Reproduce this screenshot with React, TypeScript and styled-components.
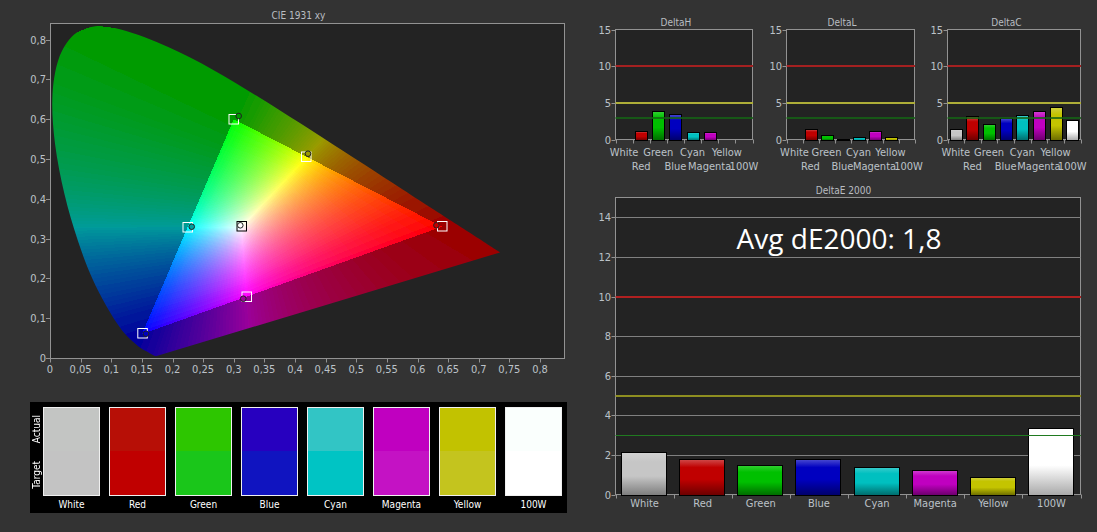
import React, { useMemo } from "react";
import styled, { createGlobalStyle } from "styled-components";

const Global = createGlobalStyle`
  html, body { margin: 0; padding: 0; background: #333333; overflow: hidden; }
`;

const FONT = `"DejaVu Sans", "Noto Sans", sans-serif`;

const Page = styled.div`
  width: 1097px;
  height: 532px;
  display: flex;
  background: #333333;
  font-family: ${FONT};
  font-stretch: condensed;
  color: #c4c8cc;
`;
const LeftColumn = styled.div`
  width: 590px;
  flex: none;
  display: flex;
  flex-direction: column;
`;
const RightColumn = styled.div`
  width: 507px;
  flex: none;
  display: flex;
  flex-direction: column;
`;
const Figure = styled.figure`
  margin: 0;
  display: flex;
  flex-direction: column;
`;
const Title = styled.figcaption<{ $top: number; $shift?: number; $line?: number }>`
  height: 14px;
  line-height: ${(p) => p.$line ?? 14}px;
  font-size: 10px;
  text-align: center;
  padding-top: ${(p) => p.$top}px;
  padding-left: ${(p) => p.$shift ?? 0}px;
  color: #b9bdc1;
`;
const SmallRow = styled.div`
  display: grid;
  grid-template-columns: 172px 160px 169px;
  height: 182px;
`;
const ChartSvg = styled.svg`
  display: block;
  overflow: visible;
`;
const AxisLabel = styled.text`
  font-family: ${FONT};
  font-stretch: condensed;
  font-size: 11px;
  fill: #bcc2c8;
`;
const AvgLabel = styled.text`
  font-family: "Open Sans", "Noto Sans", sans-serif;
  font-stretch: normal;
  font-size: 28px;
  fill: #ffffff;
`;
const Strip = styled.section`
  margin-left: 30px;
  width: 537px;
  height: 111px;
  box-sizing: border-box;
  background: #000000;
  padding: 5px 5px 0 13px;
  display: flex;
  position: relative;
`;
const SideLabels = styled.div`
  position: absolute;
  left: 0;
  top: 5px;
  width: 13px;
  height: 88px;
  box-sizing: border-box;
  padding: 8px 0 6px;
  display: flex;
  flex-direction: column;
  align-items: center;
  justify-content: space-between;
`;
const SideLabel = styled.span`
  writing-mode: vertical-rl;
  transform: rotate(180deg);
  font-size: 10px;
  line-height: 13px;
  color: #ffffff;
`;
const SwatchRow = styled.div`
  display: flex;
  gap: 9px;
`;
const SwatchColumn = styled.div`
  width: 57px;
  display: flex;
  flex-direction: column;
`;
const Swatch = styled.div<{ $actual: string; $target: string }>`
  height: 88.5px;
  box-sizing: border-box;
  border: 1px solid #f0f0f0;
  background: linear-gradient(
    ${(p) => p.$actual} 0,
    ${(p) => p.$actual} 50%,
    ${(p) => p.$target} 50%,
    ${(p) => p.$target} 100%
  );
`;
const SwatchName = styled.span`
  height: 17px;
  line-height: 17px;
  font-size: 10px;
  text-align: center;
  color: #ffffff;
`;

/* ---------- data ---------- */
const LOCUS: [number, number][] = [
  [0.1741, 0.005], [0.1733, 0.0048], [0.1714, 0.0051], [0.1689, 0.0069], [0.1644, 0.0109],
  [0.1566, 0.0177], [0.144, 0.0297], [0.1241, 0.0578], [0.1096, 0.0868], [0.0913, 0.1327],
  [0.0687, 0.2007], [0.0454, 0.295], [0.0235, 0.4127], [0.0082, 0.5384], [0.0039, 0.6548],
  [0.0139, 0.7502], [0.0389, 0.812], [0.0743, 0.8338], [0.1142, 0.8262], [0.1547, 0.8059],
  [0.1929, 0.7816], [0.2296, 0.7543], [0.2658, 0.7243], [0.3016, 0.6923], [0.3373, 0.6589],
  [0.3731, 0.6245], [0.4087, 0.5896], [0.4441, 0.5547], [0.4788, 0.5202], [0.5125, 0.4866],
  [0.5448, 0.4544], [0.5752, 0.4242], [0.6029, 0.3965], [0.627, 0.3725], [0.6482, 0.3514],
  [0.6658, 0.334], [0.6915, 0.3083], [0.7079, 0.292], [0.719, 0.2809], [0.726, 0.274],
  [0.73, 0.27], [0.7347, 0.2653],
];

const CIE = { left: 50, bottom: 358, sx: 612.5, sy: 398 };
const CIE_TOP_OFFSET = 23;
const px = (x: number) => CIE.left + CIE.sx * x;
const py = (y: number) => CIE.bottom - CIE.sy * y - CIE_TOP_OFFSET;

const GAMMA = 1 / 1.15;
const DIM = 0.6;

function chroma(x: number, y: number): [number, number, number] {
  const z = 1 - x - y;
  let r = 3.2406 * x - 1.5372 * y - 0.4986 * z;
  let g = -0.9689 * x + 1.8758 * y + 0.0415 * z;
  let b = 0.0557 * x - 0.204 * y + 1.057 * z;
  const inside = r >= 0 && g >= 0 && b >= 0;
  r = Math.max(r, 0);
  g = Math.max(g, 0);
  b = Math.max(b, 0);
  const m = Math.max(r, g, b) || 1;
  const k = (inside ? 1 : DIM) * 255;
  return [Math.pow(r / m, GAMMA) * k, Math.pow(g / m, GAMMA) * k, Math.pow(b / m, GAMMA) * k];
}

function buildMesh() {
  const Q = 5;
  const groups = new Map<string, string[]>();
  const q = (v: number) => Math.min(255, Math.round(v / Q) * Q);
  const pts = LOCUS.map(([a, b]) => [px(a), py(b)]);
  const top = Math.floor(Math.min(...pts.map((p) => p[1]))) - 1;
  const bot = Math.ceil(Math.max(...pts.map((p) => p[1]))) + 1;
  for (let row = top; row <= bot; row++) {
    const yc = row + 0.5;
    let lo = Infinity;
    let hi = -Infinity;
    for (let i = 0; i < pts.length; i++) {
      const [ax, ay] = pts[i];
      const [bx, by] = pts[(i + 1) % pts.length];
      if ((ay <= yc + 1 && by >= yc - 1) || (by <= yc + 1 && ay >= yc - 1)) {
        const t = ay === by ? 0 : Math.min(1, Math.max(0, (yc - ay) / (by - ay)));
        const xx = ax + (bx - ax) * t;
        lo = Math.min(lo, xx);
        hi = Math.max(hi, xx);
      }
    }
    if (lo === Infinity) continue;
    const start = Math.floor(lo) - 3;
    const end = Math.ceil(hi) + 3;
    let runStart = start;
    let runKey = "";
    const cy = (CIE.bottom - CIE_TOP_OFFSET - yc) / CIE.sy;
    for (let col = start; col <= end + 1; col++) {
      let key = "";
      if (col <= end) {
        const [r, g, b] = chroma((col + 0.5 - CIE.left) / CIE.sx, Math.max(cy, 0.001));
        key = `rgb(${q(r)},${q(g)},${q(b)})`;
      }
      if (key !== runKey) {
        if (runKey) {
          let list = groups.get(runKey);
          if (!list) groups.set(runKey, (list = []));
          list.push(`M${runStart} ${row}h${col - runStart}v1h${runStart - col}z`);
        }
        runKey = key;
        runStart = col;
      }
    }
  }
  return Array.from(groups.entries()).map(([fill, parts]) => ({ fill, d: parts.join("") }));
}

/* Smooth horseshoe: Catmull-Rom through the open locus, closed by the straight purple line. */
function smoothLocus() {
  const p = LOCUS.map(([a, b]) => [px(a), py(b)]);
  let d = `M${p[0][0].toFixed(2)} ${p[0][1].toFixed(2)}`;
  for (let i = 0; i < p.length - 1; i++) {
    const p0 = p[Math.max(0, i - 1)];
    const p1 = p[i];
    const p2 = p[i + 1];
    const p3 = p[Math.min(p.length - 1, i + 2)];
    const c1x = p1[0] + (p2[0] - p0[0]) / 6;
    const c1y = p1[1] + (p2[1] - p0[1]) / 6;
    const c2x = p2[0] - (p3[0] - p1[0]) / 6;
    const c2y = p2[1] - (p3[1] - p1[1]) / 6;
    d += `C${c1x.toFixed(2)} ${c1y.toFixed(2)} ${c2x.toFixed(2)} ${c2y.toFixed(2)} ${p2[0].toFixed(2)} ${p2[1].toFixed(2)}`;
  }
  return d + "Z";
}
const locusPath = smoothLocus();

const TARGETS: { x: number; y: number; cx: number; cy: number; fill: string; black?: boolean }[] = [
  { x: 233.5, y: 119, cx: 238.7, cy: 116, fill: "#009a00" },
  { x: 306, y: 156.5, cx: 308, cy: 153.7, fill: "#9a9a00" },
  { x: 187.5, y: 227, cx: 191.7, cy: 226.7, fill: "#00a0a0" },
  { x: 241.5, y: 226, cx: 240.3, cy: 225.3, fill: "#ffffff", black: true },
  { x: 246.5, y: 296.5, cx: 243.3, cy: 298.7, fill: "#a000a0" },
  { x: 442, y: 226, cx: 436.4, cy: 225.3, fill: "#c00000" },
  { x: 142.3, y: 333, cx: 146, cy: 333.7, fill: "#0000c0" },
];

function CieChart() {
  const mesh = useMemo(buildMesh, []);
  const xTicks = Array.from({ length: 17 }, (_, i) => i * 0.05);
  const yTicks = Array.from({ length: 9 }, (_, i) => i * 0.1);
  const fmt = (v: number) => (Math.round(v * 100) / 100).toString().replace(".", ",");
  const plotBottom = CIE.bottom - CIE_TOP_OFFSET + 0.5;
  return (
    <ChartSvg width={590} height={379} viewBox="0 0 590 379">
      <defs>
        <clipPath id="locus">
          <path d={locusPath} />
        </clipPath>
        <filter id="soft" x="0" y="0" width="1" height="1">
          <feGaussianBlur stdDeviation="0.6" />
        </filter>
      </defs>
      <rect x={50.5} y={0.5} width={514} height={plotBottom - 0.5} fill="#232323" stroke="#929292" />
      <g clipPath="url(#locus)">
        <g filter="url(#soft)" shapeRendering="crispEdges">
          {mesh.map((m) => (
            <path key={m.fill} fill={m.fill} d={m.d} />
          ))}
        </g>
      </g>
      {yTicks.map((v) => (
        <g key={v}>
          <line x1={46} x2={50} y1={Math.round(py(v)) + 0.5} y2={Math.round(py(v)) + 0.5} stroke="#929292" />
          <AxisLabel x={46} y={py(v) + 4} textAnchor="end">{fmt(v)}</AxisLabel>
        </g>
      ))}
      {xTicks.map((v) => (
        <g key={v}>
          <line x1={Math.round(px(v)) + 0.5} x2={Math.round(px(v)) + 0.5} y1={plotBottom} y2={plotBottom + 4} stroke="#929292" />
          <AxisLabel x={px(v)} y={350} textAnchor="middle">{fmt(v)}</AxisLabel>
        </g>
      ))}
      {TARGETS.map((t) => (
        <g key={t.x}>
          <rect x={t.x - 4.5} y={t.y - 23 - 4.5} width={9.5} height={9.5} fill="none" stroke={t.black ? "#000" : "#fff"} strokeWidth={1} />
          <circle cx={t.cx} cy={t.cy - 23} r={2.8} fill={t.fill} stroke="#222" strokeWidth={1} />
        </g>
      ))}
    </ChartSvg>
  );
}

/* ---------- bar charts ---------- */
const CATEGORIES = [
  { name: "White", base: "#c6c6c6", light: "#d2d2d2", dark: "#7c7c7c" },
  { name: "Red", base: "#c00000", light: "#cf4a4a", dark: "#6a0000" },
  { name: "Green", base: "#00c000", light: "#33d033", dark: "#006a00" },
  { name: "Blue", base: "#0000c0", light: "#4a4ad0", dark: "#00006a" },
  { name: "Cyan", base: "#00c0c0", light: "#3acccc", dark: "#006a6a" },
  { name: "Magenta", base: "#c000c0", light: "#d040d0", dark: "#6a006a" },
  { name: "Yellow", base: "#c4c400", light: "#d0d040", dark: "#6a6a00" },
  { name: "100W", base: "#ffffff", light: "#ffffff", dark: "#a8a8a8" },
];

type Ref = { value: number; color: string; width: number };

type BarProps = {
  id: string;
  width: number;
  height: number;
  left: number;
  right: number;
  top: number;
  bottom: number;
  max: number;
  ticks: number[];
  grid?: number[];
  refs: Ref[];
  values: (number | null)[];
  barWidth: number;
  barShift?: number;
  labelOffset: number;
  lastLabelShift?: number;
  staggered?: boolean;
  children?: React.ReactNode;
};

function BarChart(p: BarProps) {
  const scale = (p.bottom - p.top) / p.max;
  const y = (v: number) => p.bottom - v * scale;
  const step = (p.right - p.left) / 8;
  return (
    <ChartSvg width={p.width} height={p.height} viewBox={`0 0 ${p.width} ${p.height}`}>
      <defs>
        {CATEGORIES.map((c, i) => (
          <linearGradient key={c.name} id={`${p.id}-${i}`} x1="0" y1="0" x2="0" y2="1">
            <stop offset="0" stopColor={c.light} />
            <stop offset="0.22" stopColor={c.base} />
            <stop offset="0.55" stopColor={c.base} />
            <stop offset="1" stopColor={c.dark} />
          </linearGradient>
        ))}
      </defs>
      <rect x={p.left} y={p.top} width={p.right - p.left} height={p.bottom - p.top} fill="#232323" stroke="#929292" />
      {(p.grid ?? []).map((v) => (
        <line key={v} x1={p.left} x2={p.right} y1={Math.round(y(v)) + 0.5} y2={Math.round(y(v)) + 0.5} stroke="#808080" />
      ))}
      {p.values.map((v, i) =>
        v === null ? null : (
          <rect
            key={i}
            x={Math.round(p.left + step * (i + 0.5) - p.barWidth / 2 + (p.barShift ?? 0)) + 0.5}
            y={Math.round(y(v)) + 0.5}
            width={p.barWidth}
            height={Math.max(0.5, Math.round(p.bottom) - Math.round(y(v)))}
            fill={`url(#${p.id}-${i})`}
            stroke="#000"
          />
        )
      )}
      {p.refs.map((r) => {
        const ry = r.width === 1 ? Math.round(y(r.value)) + 0.5 : Math.round(y(r.value));
        return <line key={r.value} x1={p.left} x2={p.right + 0.5} y1={ry} y2={ry} stroke={r.color} strokeWidth={r.width} />;
      })}
      {p.ticks.map((v) => (
        <g key={v}>
          <line x1={p.left - 4} x2={p.left} y1={Math.round(y(v)) + 0.5} y2={Math.round(y(v)) + 0.5} stroke="#929292" />
          <AxisLabel x={p.left - 4.5} y={y(v) + 4} textAnchor="end">{v}</AxisLabel>
        </g>
      ))}
      {Array.from({ length: 9 }, (_, i) => (
        <line key={i} x1={Math.round(p.left + step * i) + 0.5} x2={Math.round(p.left + step * i) + 0.5} y1={p.bottom} y2={p.bottom + 4} stroke="#929292" />
      ))}
      {CATEGORIES.map((c, i) => (
        <AxisLabel
          key={c.name}
          x={p.left + step * (i + 0.5) + (i === 7 ? p.lastLabelShift ?? 0 : 0)}
          y={p.bottom + p.labelOffset + (p.staggered && i % 2 ? 14 : 0)}
          textAnchor="middle"
        >
          {c.name}
        </AxisLabel>
      ))}
      {p.children}
    </ChartSvg>
  );
}

const SMALL_REFS: Ref[] = [
  { value: 10, color: "#a42020", width: 2 },
  { value: 5, color: "#aeae38", width: 2 },
  { value: 3, color: "rgba(20,100,20,0.8)", width: 2 },
];
const BIG_REFS: Ref[] = [
  { value: 10, color: "#b02020", width: 2 },
  { value: 5, color: "#8e8e20", width: 2 },
  { value: 3, color: "#207a20", width: 1 },
];

const SMALL_CHARTS = [
  { id: "h", title: "DeltaH", left: 25.5, right: 162.5, nudge: 0, values: [null, 1.2, 3.95, 3.5, 1, 1, null, null] },
  { id: "l", title: "DeltaL", left: 24.5, right: 152.5, nudge: 2, values: [null, 1.37, 0.55, 0.13, 0.4, 1.1, 0.4, null] },
  { id: "c", title: "DeltaC", left: 25.5, right: 158.5, nudge: 0, values: [1.5, 3.27, 2.13, 2.95, 3.4, 3.95, 4.37, 2.6] },
];
const SWATCHES = [
  ["White", "#c3c5c3", "#c3c3c3"],
  ["Red", "#b70f06", "#c00000"],
  ["Green", "#2dc600", "#1ac61a"],
  ["Blue", "#2700bf", "#1014c0"],
  ["Cyan", "#32c5c5", "#00c4c4"],
  ["Magenta", "#c000c0", "#c412c4"],
  ["Yellow", "#c2c200", "#c4c41e"],
  ["100W", "#fafffd", "#ffffff"],
];

export default function App() {
  return (
    <Page>
      <Global />
      <LeftColumn>
        <Figure>
          <Title $top={9} $shift={7}>CIE 1931 xy</Title>
          <CieChart />
        </Figure>
        <Strip>
          <SideLabels>
            <SideLabel>Actual</SideLabel>
            <SideLabel>Target</SideLabel>
          </SideLabels>
          <SwatchRow>
            {SWATCHES.map(([name, a, t]) => (
              <SwatchColumn key={name}>
                <Swatch $actual={a} $target={t} />
                <SwatchName>{name}</SwatchName>
              </SwatchColumn>
            ))}
          </SwatchRow>
        </Strip>
      </LeftColumn>
      <RightColumn>
        <SmallRow>
          {SMALL_CHARTS.map((c) => (
            <Figure key={c.id}>
              <Title $top={15} $line={16}>{c.title}</Title>
              <BarChart
                id={c.id}
                width={170}
                height={150}
                left={c.left}
                right={c.right}
                top={0.5}
                bottom={110.5}
                max={15}
                ticks={[0, 5, 10, 15]}
                refs={SMALL_REFS}
                values={c.values}
                barWidth={12}
                labelOffset={16}
                lastLabelShift={c.nudge}
                staggered
              />
            </Figure>
          ))}
        </SmallRow>
        <Figure>
          <Title $top={1} $line={16}>DeltaE 2000</Title>
          <BarChart
            id="e"
            width={507}
            height={330}
            left={25.5}
            right={490.5}
            top={0.5}
            bottom={297.5}
            max={15}
            ticks={[0, 2, 4, 6, 8, 10, 12, 14]}
            grid={[2, 4, 6, 8, 10, 12, 14]}
            refs={BIG_REFS}
            values={[2.16, 1.78, 1.5, 1.8, 1.39, 1.24, 0.88, 3.34]}
            barWidth={45}
            barShift={-1}
            labelOffset={12}
          >
            <AvgLabel x={249} y={52} textAnchor="middle">Avg dE2000: 1,8</AvgLabel>
          </BarChart>
        </Figure>
      </RightColumn>
    </Page>
  );
}
